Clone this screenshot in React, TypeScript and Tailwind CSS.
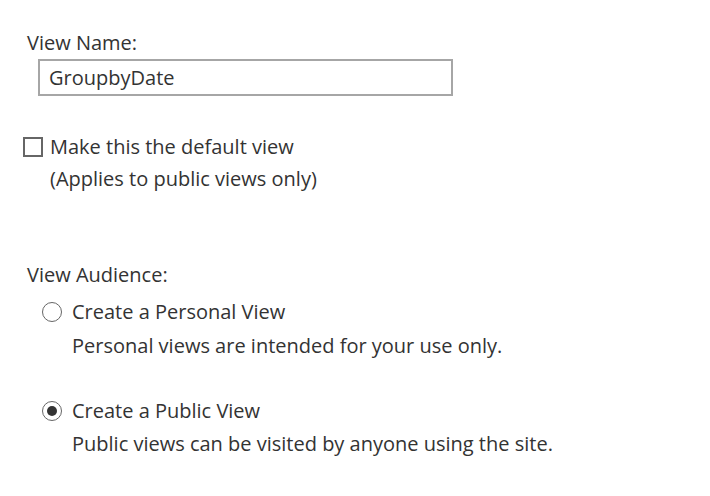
import React from "react";

export default function App() {
  const font = { fontFamily: '"Open Sans", "Noto Sans", sans-serif' };
  return (
    <div
      className="w-[710px] h-[496px] bg-white text-[#333333] text-[20px] leading-[32px] pt-[27px]"
      style={font}
    >
      <div className="ml-[27px]">View Name:</div>
      <div className="ml-[38px] w-[415px] h-[37px] border-2 border-[#a6a6a6] flex items-center pl-[9px] text-[#333333]">
        GroupbyDate
      </div>

      <div className="mt-[35px] ml-[23px] flex items-center">
        <div className="w-[20px] h-[20px] border-2 border-[#666666] bg-white"></div>
        <span className="ml-[7px]">Make this the default view</span>
      </div>
      <div className="ml-[50px]">(Applies to public views only)</div>

      <div className="mt-[64px] ml-[27px]">View Audience:</div>

      <div className="mt-[5px] ml-[42px] flex items-center">
        <div className="w-[20px] h-[20px] rounded-full border border-[#666666]"></div>
        <span className="ml-[10px]">Create a Personal View</span>
      </div>
      <div className="mt-[2px] ml-[72px]">Personal views are intended for your use only.</div>

      <div className="mt-[33px] ml-[42px] flex items-center">
        <div className="w-[20px] h-[20px] rounded-full border border-[#666666] flex items-center justify-center">
          <div className="w-[10px] h-[10px] rounded-full bg-[#333333]"></div>
        </div>
        <span className="ml-[10px]">Create a Public View</span>
      </div>
      <div className="mt-[1px] ml-[72px]">Public views can be visited by anyone using the site.</div>
    </div>
  );
}
